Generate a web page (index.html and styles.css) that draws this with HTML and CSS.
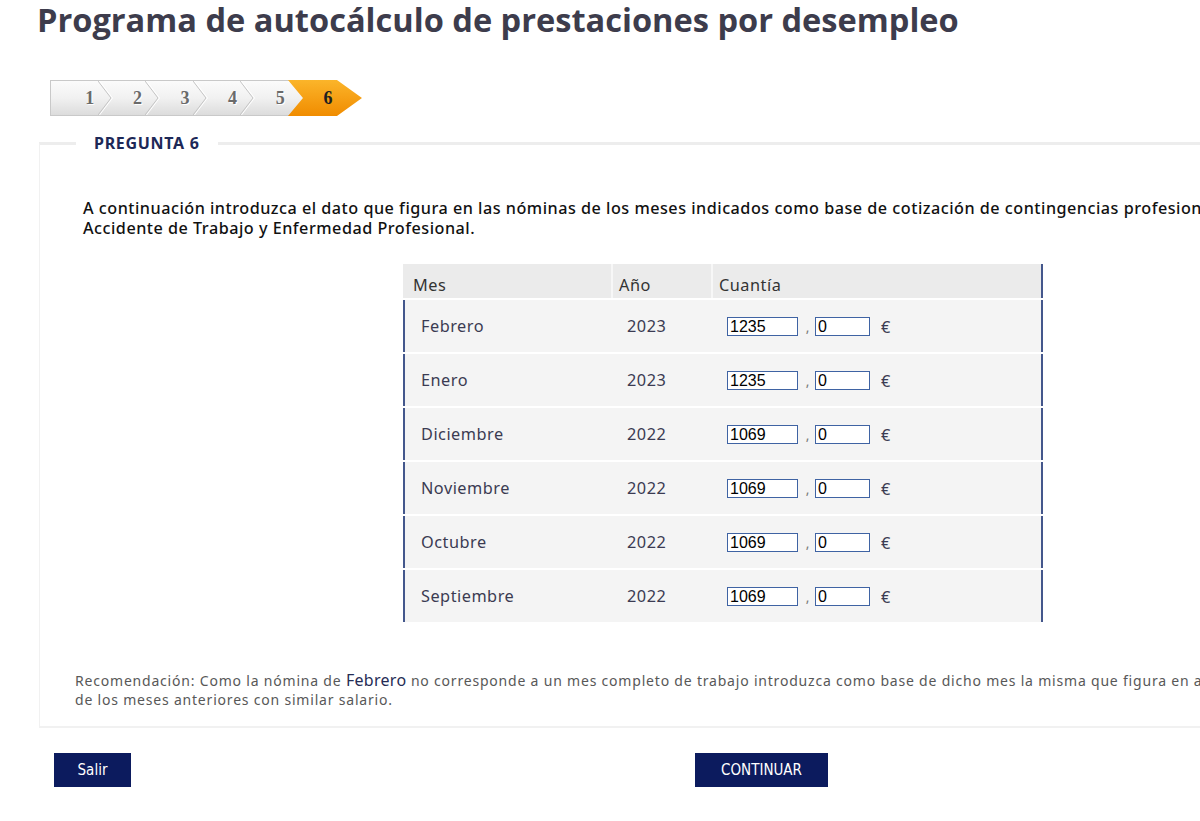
FILE: index.html
```html
<!DOCTYPE html>
<html lang="es">
<head>
<meta charset="utf-8">
<title>Programa de autocálculo de prestaciones por desempleo</title>
<link rel="stylesheet" href="styles.css">
</head>
<body>
<div class="page">
  <h1 class="title">Programa de autocálculo de prestaciones por desempleo</h1>

  <ol class="steps">
    <li class="step step-first">1</li>
    <li class="step"><svg class="chev" viewBox="0 0 15 34" width="15" height="34"><polyline points="0,0 13,17 0,34" fill="none" stroke="#c4c4c4" stroke-width="1"/><polyline points="1.5,0 14.5,17 1.5,34" fill="none" stroke="#ffffff" stroke-width="1"/></svg>2</li>
    <li class="step"><svg class="chev" viewBox="0 0 15 34" width="15" height="34"><polyline points="0,0 13,17 0,34" fill="none" stroke="#c4c4c4" stroke-width="1"/><polyline points="1.5,0 14.5,17 1.5,34" fill="none" stroke="#ffffff" stroke-width="1"/></svg>3</li>
    <li class="step"><svg class="chev" viewBox="0 0 15 34" width="15" height="34"><polyline points="0,0 13,17 0,34" fill="none" stroke="#c4c4c4" stroke-width="1"/><polyline points="1.5,0 14.5,17 1.5,34" fill="none" stroke="#ffffff" stroke-width="1"/></svg>4</li>
    <li class="step"><svg class="chev" viewBox="0 0 15 34" width="15" height="34"><polyline points="0,0 13,17 0,34" fill="none" stroke="#c4c4c4" stroke-width="1"/><polyline points="1.5,0 14.5,17 1.5,34" fill="none" stroke="#ffffff" stroke-width="1"/></svg>5</li>
    <li class="step step-active">6</li>
  </ol>

  <fieldset class="question">
    <legend class="question-title">PREGUNTA 6</legend>
    <p class="intro">A continuación introduzca el dato que figura en las nóminas de los meses indicados como base de cotización de contingencias profesionales por<br>Accidente de Trabajo y Enfermedad Profesional.</p>

    <table class="months">
      <thead>
        <tr>
          <th class="col-month">Mes</th>
          <th class="col-year">Año</th>
          <th class="col-amount">Cuantía</th>
        </tr>
      </thead>
      <tbody>
        <tr>
          <td class="cell-month">Febrero</td>
          <td class="cell-year">2023</td>
          <td class="cell-amount"><input class="int" type="text" value="1235"><span class="comma">,</span><input class="dec" type="text" value="0"><span class="euro">€</span></td>
        </tr>
        <tr>
          <td class="cell-month">Enero</td>
          <td class="cell-year">2023</td>
          <td class="cell-amount"><input class="int" type="text" value="1235"><span class="comma">,</span><input class="dec" type="text" value="0"><span class="euro">€</span></td>
        </tr>
        <tr>
          <td class="cell-month">Diciembre</td>
          <td class="cell-year">2022</td>
          <td class="cell-amount"><input class="int" type="text" value="1069"><span class="comma">,</span><input class="dec" type="text" value="0"><span class="euro">€</span></td>
        </tr>
        <tr>
          <td class="cell-month">Noviembre</td>
          <td class="cell-year">2022</td>
          <td class="cell-amount"><input class="int" type="text" value="1069"><span class="comma">,</span><input class="dec" type="text" value="0"><span class="euro">€</span></td>
        </tr>
        <tr>
          <td class="cell-month">Octubre</td>
          <td class="cell-year">2022</td>
          <td class="cell-amount"><input class="int" type="text" value="1069"><span class="comma">,</span><input class="dec" type="text" value="0"><span class="euro">€</span></td>
        </tr>
        <tr>
          <td class="cell-month">Septiembre</td>
          <td class="cell-year">2022</td>
          <td class="cell-amount"><input class="int" type="text" value="1069"><span class="comma">,</span><input class="dec" type="text" value="0"><span class="euro">€</span></td>
        </tr>
      </tbody>
    </table>

    <p class="note">Recomendación: Como la nómina de <span class="note-month">Febrero</span> no corresponde a un mes completo de trabajo introduzca como base de dicho mes la misma que figura en alguna<br>de los meses anteriores con similar salario.</p>
  </fieldset>

  <div class="actions">
    <button class="btn btn-exit" type="button">Salir</button>
    <button class="btn btn-next" type="button">CONTINUAR</button>
  </div>
</div>
</body>
</html>
```
FILE: styles.css
```css
html, body {
  margin: 0;
  padding: 0;
  background: #ffffff;
  overflow: hidden;
}

.page {
  width: 1420px;
  padding: 0 0 0 39px;
  font-family: "Noto Sans", "Open Sans", sans-serif;
}

.title {
  margin: 0 0 0 -2px;
  font-family: "Open Sans", sans-serif;
  font-weight: 700;
  font-size: 32.6px;
  line-height: 40px;
  color: #3d3c4c;
}

/* stepper */
.steps {
  list-style: none;
  margin: 40px 0 0 11px;
  padding: 0;
  display: flex;
  width: max-content;
  height: 36px;
  box-sizing: border-box;
  border: 1px solid #c9c9c9;
  background: linear-gradient(#fbfbfb, #f1f1f1 50%, #dcdcdc);
}

.step {
  position: relative;
  width: 47.6px;
  height: 34px;
  box-sizing: border-box;
  padding-left: 32px;
  text-align: center;
  font-family: "Liberation Serif", "DejaVu Serif", serif;
  font-weight: 700;
  font-size: 18px;
  line-height: 34px;
  color: #6a6a6a;
  text-shadow: 1px 1px 0 #ffffff;
}

.step-first {
  width: 46.6px;
  padding-left: 31px;
}

.chev {
  position: absolute;
  left: 0;
  top: 0;
}

.step-active {
  width: 74px;
  height: 36px;
  margin: -1px -26px -1px 0;
  padding-left: 6px;
  line-height: 36px;
  color: #202020;
  text-shadow: none;
  background: linear-gradient(#fbb52a, #f6a015 50%, #f08c00);
  clip-path: polygon(0 0, 49px 0, 74px 18px, 49px 36px, 0 36px, 15px 18px);
}

/* question box */
.question {
  margin: 17px 0 0 0;
  padding: 0 0 17px 0;
  width: 1368px;
  box-sizing: border-box;
  border: 0;
  border-top: 3px solid #ededed;
  border-left: 1px solid #f1f1f1;
  border-bottom: 2px solid #f1f1f1;
  min-width: 0;
}

.question-title {
  margin-left: 36px;
  padding: 0 18px;
  font-family: "Noto Sans", sans-serif;
  font-weight: 700;
  font-size: 16px;
  line-height: 20px;
  color: #1d2857;
  letter-spacing: 0.7px;
}

.intro {
  margin: 45px 0 0 43px;
  font-size: 16.2px;
  line-height: 20px;
  font-weight: 500;
  letter-spacing: 0.5px;
  color: #111111;
  white-space: nowrap;
}

/* table */
.months {
  margin: 24px 0 0 363px;
  border-collapse: separate;
  border-spacing: 0 2px;
  width: 640px;
  table-layout: fixed;
  font-size: 16.3px;
  letter-spacing: 0.5px;
}

.months th {
  box-sizing: border-box;
  height: 34px;
  padding: 8px 0 0 8px;
  background: #ebebeb;
  text-align: left;
  font-weight: 400;
  color: #333333;
  vertical-align: middle;
}

.months th.col-month {
  width: 208px;
  padding-left: 10px;
}

.months th.col-year {
  width: 100px;
  border-left: 2px solid #f7f7f7;
  padding-left: 6px;
}

.months th.col-amount {
  border-left: 2px solid #f7f7f7;
  border-right: 2px solid #44578c;
  padding-left: 6px;
}

.months td {
  height: 52px;
  padding: 0 0 0 16px;
  background: #f4f4f4;
  color: #3b3b52;
  vertical-align: middle;
}

.months td.cell-month {
  border-left: 2px solid #44578c;
}

.months td.cell-amount {
  border-right: 2px solid #44578c;
}

.int, .dec {
  height: 19px;
  box-sizing: border-box;
  margin: 0;
  padding: 0 2px;
  border: 1px solid #3f63a3;
  border-radius: 0;
  background: #ffffff;
  font-family: "Liberation Sans", Arial, sans-serif;
  font-size: 16px;
  letter-spacing: 0;
  color: #000000;
  vertical-align: middle;
}

.int { width: 71px; }
.dec { width: 55px; }

.comma {
  display: inline-block;
  width: 17px;
  padding-left: 3px;
  box-sizing: border-box;
  text-align: center;
  color: #7a7a7a;
  font-size: 14px;
  vertical-align: middle;
}

.euro {
  margin-left: 11px;
  color: #3b3b52;
  vertical-align: middle;
}

/* note */
.note {
  margin: 47px 0 0 35px;
  font-size: 14px;
  line-height: 19px;
  letter-spacing: 0.8px;
  color: #585858;
  font-weight: 400;
  white-space: nowrap;
}

.note-month {
  font-size: 16px;
  letter-spacing: 0.3px;
  color: #252c55;
}

/* buttons */
.actions {
  display: flex;
  gap: 564px;
  margin: 25px 0 0 15px;
}

.btn {
  height: 34px;
  border: 0;
  border-radius: 0;
  background: #0c1b5e;
  color: #ffffff;
  font-family: "DejaVu Sans Condensed", "DejaVu Sans", sans-serif;
  font-size: 15px;
  padding: 0;
  cursor: pointer;
}

.btn-exit { width: 77px; }
.btn-next { width: 133px; }
```
